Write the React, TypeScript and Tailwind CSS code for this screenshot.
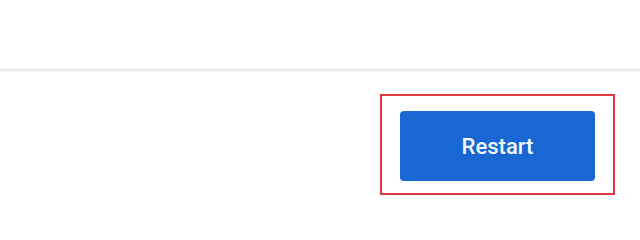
export default function App() {
    return (
        <div className="w-[640px] h-[211px] bg-white flex flex-col" style={{ fontFamily: 'Roboto, "Liberation Sans", sans-serif' }}>
            {/* empty header region */}
            <div className="h-[68px]" />
            <div className="h-[4px] bg-[#ebebeb] border-t border-b border-t-[#f1f1f1] border-b-[#f3f3f3]" />
            <div className="flex justify-end pt-[22px] pr-[25px]">
                <div className="border-2 border-[#e0393e] pt-[15px] pb-[12px] px-[18px]">
                    <button className="w-[195px] h-[70px] rounded-[4px] bg-[#1967d2] text-[#f4f7fc] text-[22px] font-medium">
                        Restart
                    </button>
                </div>
            </div>
        </div>
    );
}
